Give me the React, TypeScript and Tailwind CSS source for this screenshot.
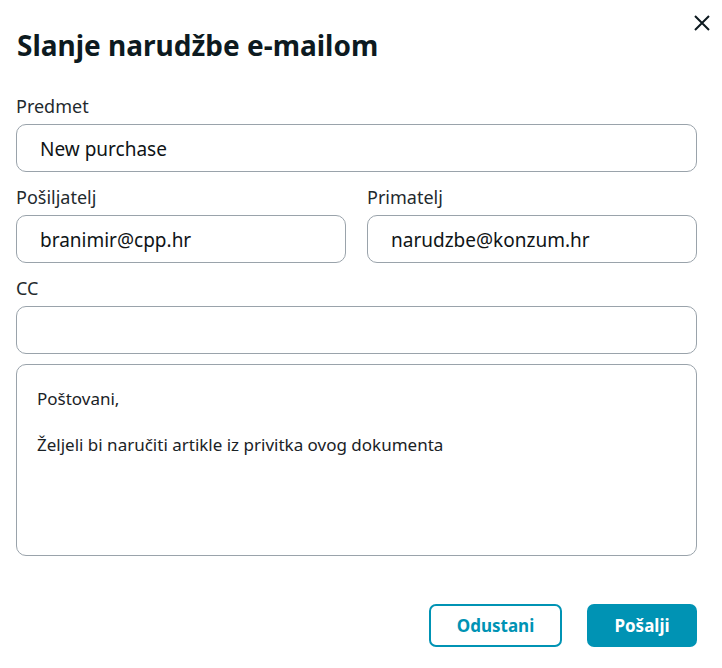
import React from "react";

const Field: React.FC<{ label?: string; value: string; className?: string }> = ({
  label,
  value,
  className,
}) => (
  <div className={className}>
    {label && <div className="text-[18px] leading-[24px] text-[#1f2a2e] mb-[6px]">{label}</div>}
    <div className="h-[48px] rounded-[10px] border border-[#9aa3ab] flex items-center pl-[23px] pt-[2px] text-[19px] text-[#0f1416]">
      {value}
    </div>
  </div>
);

const App: React.FC = () => {
  return (
    <div
      className="w-[722px] h-[668px] bg-white relative"
      style={{ fontFamily: '"Noto Sans", sans-serif' }}
    >
      <button className="absolute right-[10px] top-[13px] w-[20px] h-[20px] flex items-center justify-center text-[#0d1a20]">
        <svg width="18" height="18" viewBox="0 0 18 18" fill="none" stroke="currentColor" strokeWidth="2">
          <path d="M2 2 L16 16 M16 2 L2 16" />
        </svg>
      </button>
      <div className="pl-[16px] pr-[25px] pt-[26px]">
        <h1 className="text-[28px] leading-[38px] font-bold text-[#0d1a20] pl-[1px]">
          Slanje narudžbe e-mailom
        </h1>
        <Field label="Predmet" value="New purchase" className="mt-[30px]" />
        <div className="grid grid-cols-2 gap-[21px] mt-[13px]">
          <Field label="Pošiljatelj" value="branimir@cpp.hr" />
          <Field label="Primatelj" value="narudzbe@konzum.hr" />
        </div>
        <Field label="CC" value="" className="mt-[13px]" />
        <div className="mt-[10px] h-[192px] rounded-[10px] border border-[#9aa3ab] px-[20px] pt-[22px] text-[17px] leading-[24px] text-[#1a2226]">
          <div>Poštovani,</div>
          <div className="mt-[22px]">Željeli bi naručiti artikle iz privitka ovog dokumenta</div>
        </div>
        <div className="flex justify-end gap-[25px] mt-[48px]">
          <button className="w-[133px] h-[43px] rounded-[7px] border-2 border-[#0093b4] text-[#0093b4] font-bold text-[17px]">
            Odustani
          </button>
          <button className="w-[110px] h-[43px] rounded-[7px] bg-[#0093b4] text-white font-bold text-[17px]">
            Pošalji
          </button>
        </div>
      </div>
    </div>
  );
};

export default App;
